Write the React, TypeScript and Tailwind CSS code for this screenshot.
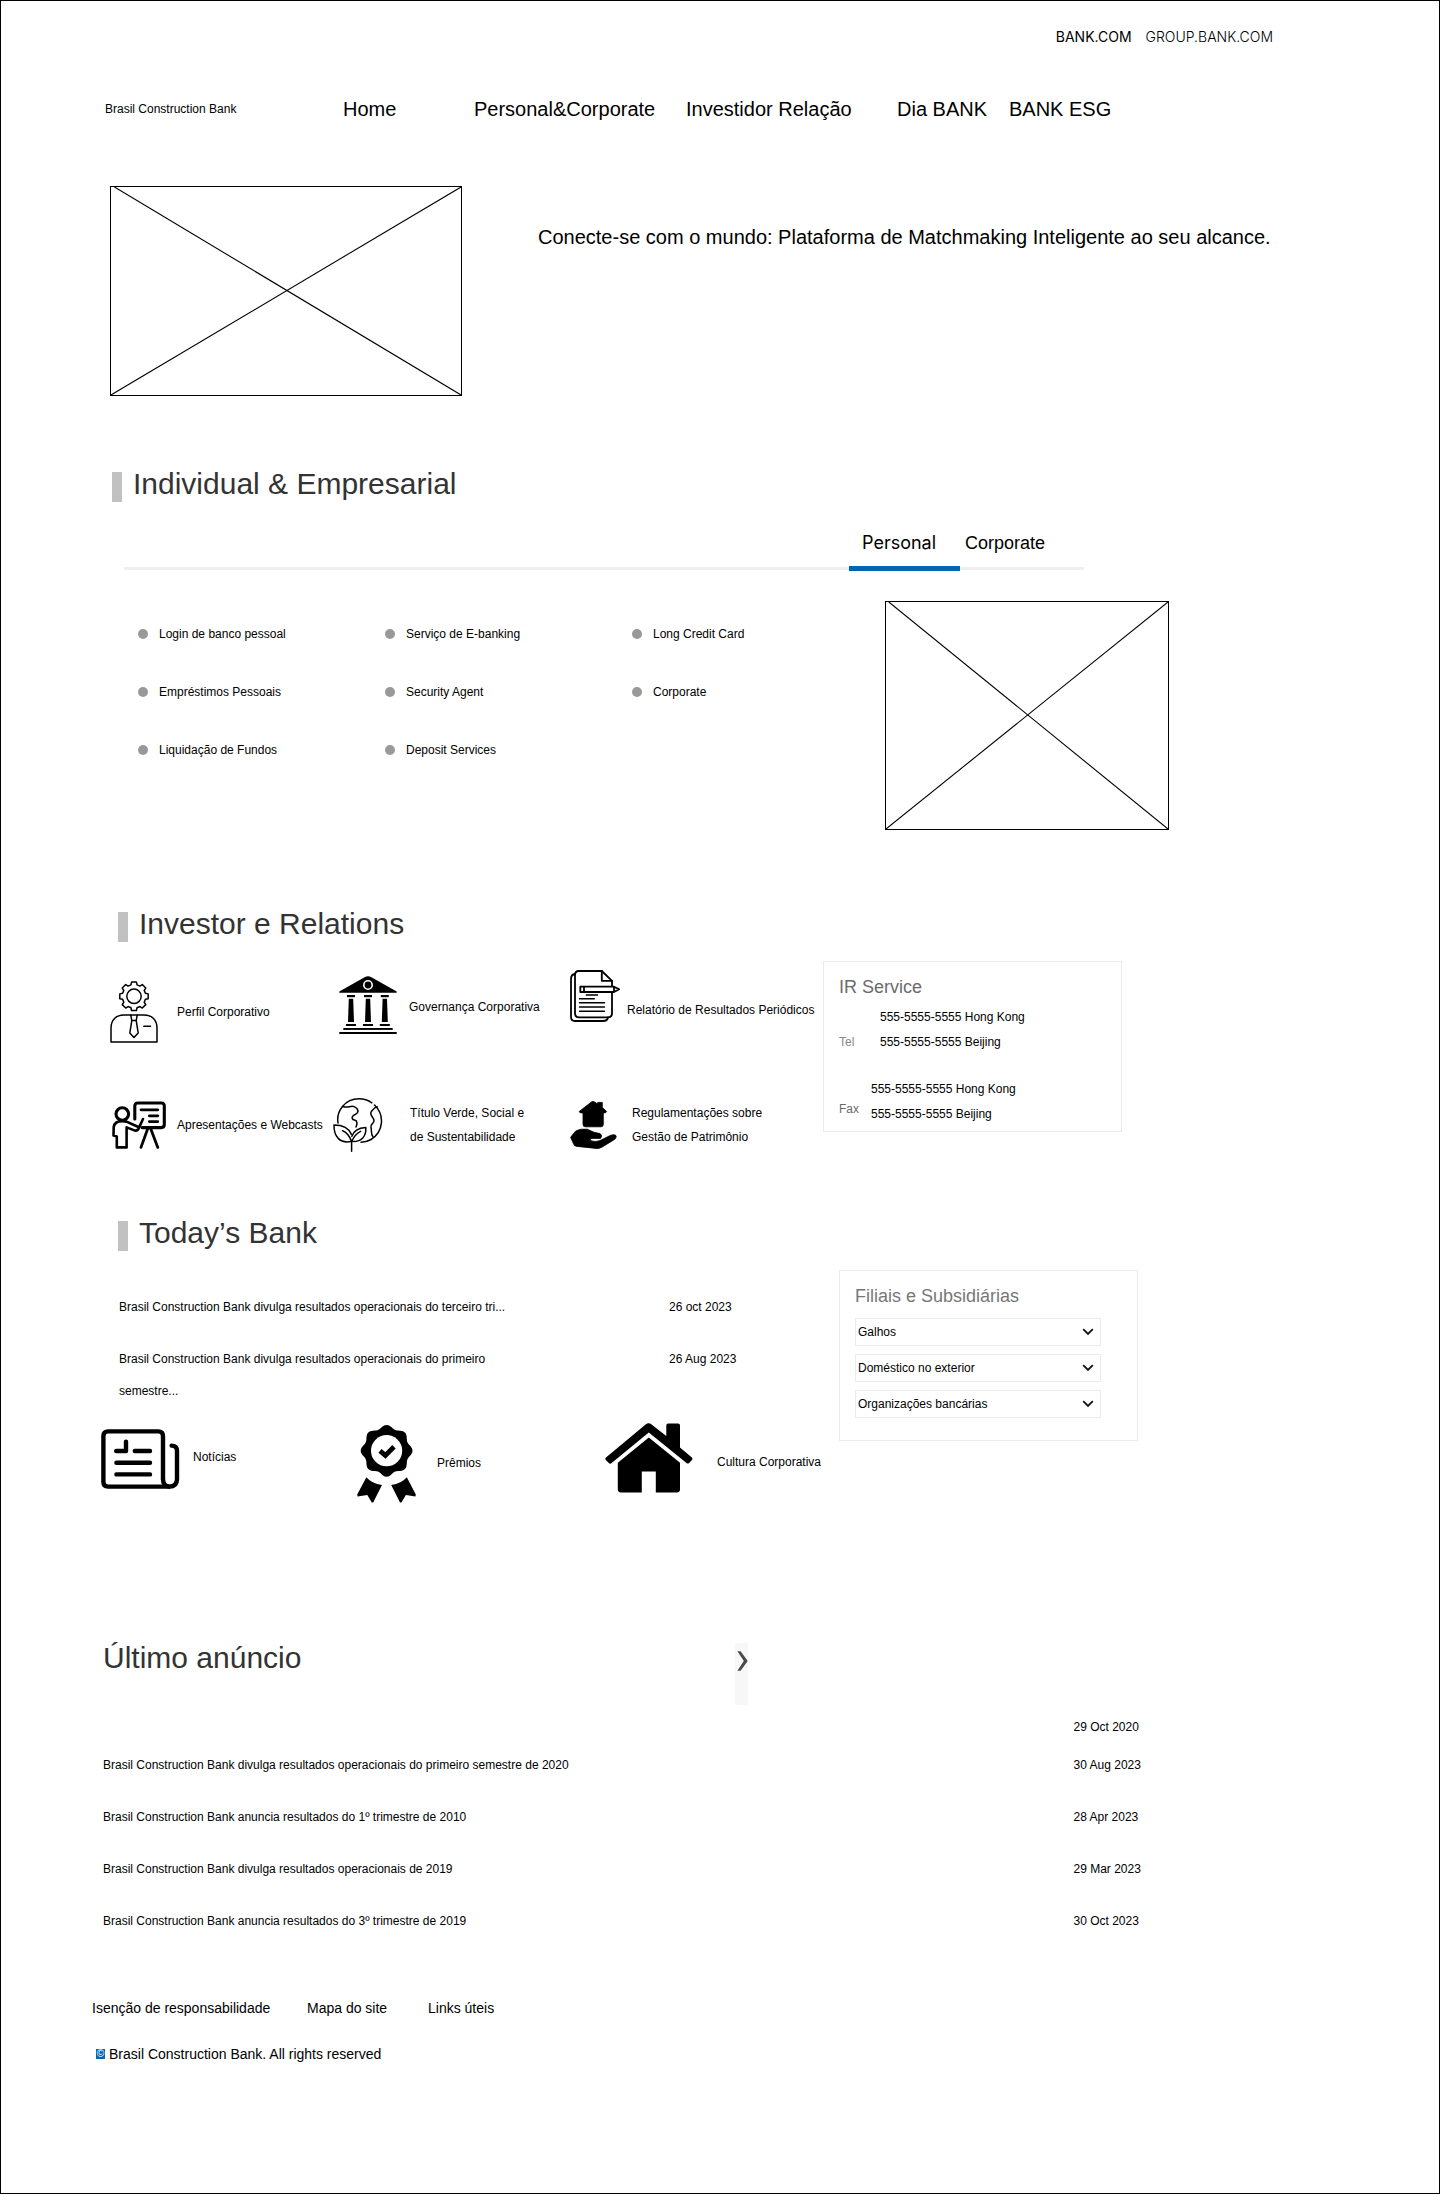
import { useState, type ReactNode } from "react";

const gearPath = (() => {
  const pts: string[] = [];
  const teeth = 8;
  for (let i = 0; i < teeth; i++) {
    const base = (i * 2 * Math.PI) / teeth - Math.PI / 2;
    const corners: [number, number][] = [
      [-0.26, 11.8],
      [-0.17, 14.4],
      [0.17, 14.4],
      [0.26, 11.8],
    ];
    corners.forEach(([a, r]) =>
      pts.push(`${(24 + r * Math.cos(base + a)).toFixed(2)} ${(15.3 + r * Math.sin(base + a)).toFixed(2)}`),
    );
  }
  return `M${pts.join("L")}Z`;
})();

const sealPath = (() => {
  const pts: string[] = [];
  for (let i = 0; i < 96; i++) {
    const a = (i * 2 * Math.PI) / 96;
    const r = 24.2 + 1.7 * Math.cos(8 * a);
    pts.push(`${(29.6 + r * Math.cos(a)).toFixed(2)} ${(25.8 + r * Math.sin(a)).toFixed(2)}`);
  }
  return `M${pts.join("L")}Z`;
})();

function ProfileIcon() {
  return (
    <svg width="48" height="62" viewBox="0 0 48 62" fill="none" stroke="#000" strokeWidth="1.5" strokeLinejoin="round" strokeLinecap="round" aria-hidden="true">
      <path d={gearPath} />
      <circle cx="24" cy="15.3" r="7.2" />
      <path d="M1 61V47C1 39 6 33.9 14 33.9H34C42 33.9 47 39 47 47V61Z" />
      <path d="M20.8 34L21.8 39.6H26.2L27.2 34M21.8 39.6L19.8 52L24 56.5L28.2 52L26.2 39.6M33.8 45.2H40.5" />
    </svg>
  );
}

function BuildingIcon() {
  return (
    <svg width="58" height="62" viewBox="0 0 58 62" fill="#000" aria-hidden="true">
      <path d="M0.3 16.8V15.6L25.6 1.2Q29 -0.8 32.4 1.2L57.7 15.6V16.8Z" />
      <circle cx="29" cy="9" r="4.2" stroke="#fff" strokeWidth="1.6" />
      {[12, 29, 45.8].map((x) => (
        <g key={x}>
          <rect x={x - 4} y="19" width="8" height="2.2" />
          <path d={`M${x - 2.2} 22.8H${x + 2.2}L${x + 3} 46H${x - 3}Z`} />
          <rect x={x - 5} y="48" width="10" height="2" />
        </g>
      ))}
      <rect x="4.3" y="52" width="49.4" height="1.9" />
      <rect x="0.3" y="56" width="57.4" height="2" />
    </svg>
  );
}

function ReportIcon() {
  return (
    <svg width="50" height="52" viewBox="0 0 50 52" fill="none" stroke="#000" strokeWidth="1.8" strokeLinejoin="round" strokeLinecap="round" aria-hidden="true">
      <path d="M5 4Q1 4.5 1 9V47Q1 51 5 51H33Q37.5 51 38 47.5" />
      <path d="M31.8 1H9Q5 1 5 5V43.3Q5 47.3 9 47.3H38Q42 47.3 42 43.3V10.8Z" />
      <path d="M31.8 1V10.8H42" />
      <path d="M10.3 16.7H44L49.2 19.3L44 22H10.3ZM14 16.7V22M44 16.7V22" fill="#fff" />
      <path d="M16.3 25H27.5M9.5 28.8H24.3M9.5 32.8H34.5M9.5 37H34.5M9.5 41.2H34.5" strokeWidth="1.4" />
    </svg>
  );
}

function PresentationIcon() {
  return (
    <svg width="54" height="48" viewBox="0 0 54 48" fill="none" stroke="#000" strokeWidth="3.1" strokeLinejoin="round" strokeLinecap="round" aria-hidden="true">
      <circle cx="10.3" cy="13" r="6.3" />
      <path d="M22.8 18V5Q22.8 2 25.8 2H49.3Q52.3 2 52.3 5V23.6Q52.3 26.6 49.3 26.6H30" />
      <path d="M29 8.8H45.8M37.3 14.8H45.8M37.3 20.6H45.8" strokeWidth="2.8" />
      <path d="M35.6 28L29 46.4M38.8 28L45.8 46.4" strokeWidth="2.8" />
      <path d="M4.8 46.4H14.6V26.4L23 29.6Q26 30 27 26.6L31 18M26.4 26L14.5 20.6Q3 18.6 1.7 26L1.5 34.5L4.8 35.5V46.4" strokeWidth="2.6" />
    </svg>
  );
}

function GlobeLeafIcon() {
  return (
    <svg width="50" height="54" viewBox="0 0 50 54" fill="none" stroke="#000" strokeWidth="1.5" strokeLinejoin="round" strokeLinecap="round" aria-hidden="true">
      <path d="M5 25C3 13 12 0.8 26 0.8C31 0.8 35.5 2.4 38.8 4.8M41.5 7C52 17 50.5 34 38 41.5Q33.5 44.2 28 44.2" />
      <path d="M10 8.5C15 10.5 17.5 7.2 21 8.6C26 10.8 26 14.4 22.4 16.4C18 18.4 18.4 21.4 21.6 22C24.6 22.6 24.4 26 23 29" />
      <path d="M44.4 9C42.5 8.2 40.5 11 38.4 13.4C35.6 17.4 41.6 19.4 41 23C40.6 25.8 37 26 38 29.6C39 32.6 37.4 36 40 38.8" />
      <path d="M18.6 53.2V42.6M18.6 43.8C16.6 37.4 14 34.6 9.6 32.8M18.6 43.8C21 38.4 23.6 35.2 27.6 33.4" />
      <path d="M17.6 43.6C7 45.4 0.8 38.8 1 27C9.6 27 15.4 29 18.4 36.4" />
      <path d="M19.8 43.6C28.4 43.8 33.4 38.6 32.8 29.4C26 29.8 20.6 32.4 18.8 38.4" />
    </svg>
  );
}

function HandHouseIcon() {
  return (
    <svg width="47" height="48" viewBox="0 0 47 48" fill="#000" stroke="#000" strokeWidth="0.8" strokeLinejoin="round" aria-hidden="true">
      <path d="M9.2 10.5L21.5 0.9Q23 0 24.5 0.9L27.7 3V1.4H32.3V6.4L36.6 10.5Q36.4 12 33.3 12V23.5Q33.3 25.8 31 25.8H15.3Q13 25.8 13 23.5V12Q9 12 9.2 10.5Z" />
      <path d="M0.6 36.3L5.7 30Q10 27.4 17.3 28.2L24 31.3L30 32.6Q33 34.6 30.6 37.4L20.4 37.4V39.6Q25 41.4 30 39.6L40.6 34.3Q46.4 32.6 46.2 36Q46 38 43 39.4L31.5 46.4Q29 47.8 26 47.4L7 45.4Q4 45.2 3.4 42.6Z" />
    </svg>
  );
}

function NewspaperIcon() {
  return (
    <svg width="79" height="68" viewBox="0 -6 79 68" fill="none" stroke="#000" strokeWidth="4.4" strokeLinejoin="round" strokeLinecap="round" aria-hidden="true">
      <path d="M62 50V7Q62 2.4 57.4 2.4H7Q2.4 2.4 2.4 7V53Q2.4 57.6 7 57.6H68.4Q76 57.6 76 50V22Q76 16.8 70.6 16.6" />
      <path d="M62 50Q62 57.2 68.4 57.6" />
      <path d="M15.4 33.8H49M15.4 45.4H49M33.8 22H49M15.2 22H25V12.6" />
    </svg>
  );
}

function AwardIcon() {
  return (
    <svg width="59" height="80" viewBox="0 -2 59 80" aria-hidden="true">
      <path d={sealPath} fill="#000" />
      <circle cx="29.6" cy="25.7" r="15.6" fill="#fff" />
      <path d="M23 25.8L28.4 30.4L37 21.8" fill="none" stroke="#000" strokeWidth="4.8" />
      <path
        d="M9.4 52.2Q14.5 58.4 25 60L16.2 77.4H14.8L10.3 70L0.6 71.4L0.2 69.6ZM49.8 52.2Q44.7 58.4 34.2 60L43 77.4H44.4L48.9 70L58.4 71.4L58.8 69.6Z"
        fill="#000"
      />
    </svg>
  );
}

function HouseIcon() {
  return (
    <svg width="88" height="78" viewBox="0 0 88 78" fill="#000" aria-hidden="true">
      <path d="M1 34.6L40.6 1.4Q43.6 -0.8 46.6 1.4L61.3 13V2.2Q61.3 0.4 63.2 0.4H73Q75 0.4 75 2.2V24.4L86.6 34.2Q88 35.6 87 37L83.8 40.2Q82.8 41 81.8 40.2L43.8 9.6L6 40.4Q5 41 4 40.2L0.8 37Q-0.2 35.6 1 34.6Z" />
      <path d="M43.8 14.4L75 39.8V66.6Q75 69.4 72 69.4H50.8V48.6H36.8V69.4H15.8Q12.8 69.4 12.8 66.6V39.8Z" />
    </svg>
  );
}

function ImagePlaceholder({ className }: { className: string }) {
  return (
    <div role="img" aria-label="Imagem" className={`border border-black ${className}`}>
      <svg className="block h-full w-full" viewBox="0 0 100 100" preserveAspectRatio="none" stroke="#000" strokeWidth="1.1" aria-hidden="true">
        <line x1="1" y1="0" x2="100" y2="100" vectorEffect="non-scaling-stroke" />
        <line x1="0" y1="100" x2="100" y2="0" vectorEffect="non-scaling-stroke" />
      </svg>
    </div>
  );
}

function SectionTitle({ children }: { children: ReactNode }) {
  return (
    <div className="flex items-start gap-[11px]">
      <span className="h-[30px] w-[10px] shrink-0 bg-[#c1c1c1]" />
      <h2 className="text-[30px] leading-6 whitespace-nowrap text-[#333]">{children}</h2>
    </div>
  );
}

function IconLink({ icon, slot, className = "", children }: { icon: ReactNode; slot: string; className?: string; children: ReactNode }) {
  return (
    <a href="#" className={`flex text-xs leading-6 whitespace-nowrap ${className}`}>
      <span className={`shrink-0 ${slot}`}>{icon}</span>
      <span>{children}</span>
    </a>
  );
}

const services = [
  "Login de banco pessoal",
  "Serviço de E-banking",
  "Long Credit Card",
  "Empréstimos Pessoais",
  "Security Agent",
  "Corporate",
  "Liquidação de Fundos",
  "Deposit Services",
];

const announcements = [
  ["Brasil Construction Bank divulga resultados operacionais do primeiro semestre de 2020", "30 Aug 2023"],
  ["Brasil Construction Bank anuncia resultados do 1º trimestre de 2010", "28 Apr 2023"],
  ["Brasil Construction Bank divulga resultados operacionais de 2019", "29 Mar 2023"],
  ["Brasil Construction Bank anuncia resultados do 3º trimestre de 2019", "30 Oct 2023"],
];

const branchMenus = ["Galhos", "Doméstico no exterior", "Organizações bancárias"];

export default function App() {
  const [tab, setTab] = useState("Personal");

  return (
    <div className="min-h-screen border border-black bg-white font-['Liberation_Sans',Arial,sans-serif] text-black">
      <header>
        <div className="flex justify-end gap-[14px] pt-[26px] pr-[166px] font-[Inter,sans-serif] text-sm leading-5">
          <a href="#">BANK.COM</a>
          <a href="#" className="font-light">GROUP.BANK.COM</a>
        </div>
        <nav className="mt-12 grid grid-cols-[238fr_131fr_212fr_211fr_112fr_430fr] items-center pl-[104px] text-xl leading-7 whitespace-nowrap">
          <a href="#" className="text-xs leading-7">Brasil Construction Bank</a>
          <a href="#">Home</a>
          <a href="#">Personal&amp;Corporate</a>
          <a href="#">Investidor Relação</a>
          <a href="#">Dia BANK</a>
          <a href="#">BANK ESG</a>
        </nav>
      </header>

      <main>
        <section className="mt-[63px] grid grid-cols-[352fr_76fr_901fr] pl-[109px]">
          <ImagePlaceholder className="h-[210px]" />
          <h1 className="col-start-3 mt-[37px] text-xl leading-7">
            Conecte-se com o mundo: Plataforma de Matchmaking Inteligente ao seu alcance.
          </h1>
        </section>

        <section className="mt-[76px]">
          <div className="pl-[111px]">
            <SectionTitle>Individual &amp; Empresarial</SectionTitle>
          </div>
          <div className="mt-[27px] grid grid-cols-[960fr_355fr] pl-[123px]">
            <div role="tablist" className="flex justify-end border-b-[3px] border-[#eee] text-lg leading-7">
              <button
                type="button"
                role="tab"
                aria-selected={tab === "Personal"}
                onClick={() => setTab("Personal")}
                className={`-mb-1 w-[111px] cursor-pointer border-b-[5px] pb-[9px] pl-[13px] text-left font-[Inter,sans-serif] ${tab === "Personal" ? "border-[#0066b3]" : "border-transparent"}`}
              >
                Personal
              </button>
              <button
                type="button"
                role="tab"
                aria-selected={tab === "Corporate"}
                onClick={() => setTab("Corporate")}
                className={`-mb-1 w-[124px] cursor-pointer border-b-[5px] pb-[9px] pl-[5px] text-left ${tab === "Corporate" ? "border-[#0066b3]" : "border-transparent"}`}
              >
                Corporate
              </button>
            </div>
          </div>
          <div className="mt-[31px] grid grid-cols-[747fr_284fr_270fr] pl-[137px]">
            <ul className="grid grid-cols-[247fr_247fr_253fr] content-start pt-1 text-xs">
              {services.map((s) => (
                <li key={s} className="flex h-[58px] items-center gap-[11px]">
                  <span className="size-[10px] rounded-full bg-[#999]" />
                  <a href="#">{s}</a>
                </li>
              ))}
            </ul>
            <ImagePlaceholder className="h-[229px]" />
          </div>
        </section>

        <section className="mt-[82px]">
          <div className="pl-[117px]">
            <SectionTitle>Investor e Relations</SectionTitle>
          </div>
          <div className="mt-[19px] grid grid-cols-[713fr_299fr_317fr] items-start pl-[109px]">
            <div className="grid grid-cols-[223fr_237fr_253fr] gap-y-[55px] pt-[9px]">
              <IconLink icon={<ProfileIcon />} slot="w-[67px]" className="items-center self-end">
                Perfil Corporativo
              </IconLink>
              <IconLink icon={<BuildingIcon />} slot="w-[76px] pl-[6px]" className="items-center self-center">
                Governança Corporativa
              </IconLink>
              <IconLink icon={<ReportIcon />} slot="w-[57px]" className="h-[73px] items-start [&>span:last-child]:mt-7">
                Relatório de Resultados Periódicos
              </IconLink>
              <IconLink icon={<PresentationIcon />} slot="w-[67px] pl-[2px]" className="items-center">
                Apresentações e Webcasts
              </IconLink>
              <IconLink icon={<GlobeLeafIcon />} slot="w-[77px]" className="items-center">
                Título Verde, Social e
                <br />
                de Sustentabilidade
              </IconLink>
              <IconLink icon={<HandHouseIcon />} slot="w-[62px]" className="items-center">
                Regulamentações sobre
                <br />
                Gestão de Patrimônio
              </IconLink>
            </div>
            <aside className="border border-[#ebebeb] px-[15px] pt-[13px] pb-1">
              <h3 className="text-lg leading-6 text-[#6b6b6b]">IR Service</h3>
              <dl className="mt-[6px] text-xs leading-[25px]">
                <div className="flex">
                  <dt className="w-[41px] self-end text-[#888]">Tel</dt>
                  <dd>
                    555-5555-5555 Hong Kong
                    <br />
                    555-5555-5555 Beijing
                  </dd>
                </div>
                <div className="mt-[22px] flex">
                  <dt className="w-8 self-end leading-9 text-[#6b6b6b]">Fax</dt>
                  <dd>
                    555-5555-5555 Hong Kong
                    <br />
                    555-5555-5555 Beijing
                  </dd>
                </div>
              </dl>
            </aside>
          </div>
        </section>

        <section className="mt-[69px]">
          <div className="pl-[117px]">
            <SectionTitle>Today’s Bank</SectionTitle>
          </div>
          <div className="mt-[19px] grid grid-cols-[738fr_299fr_301fr] items-start pl-[100px]">
            <div>
              <ul className="pt-[21px] pl-[18px] text-xs leading-8">
                <li className="grid grid-cols-[550fr_170fr]">
                  <a href="#">Brasil Construction Bank divulga resultados operacionais do terceiro tri...</a>
                  <time>26 oct 2023</time>
                </li>
                <li className="mt-5 grid grid-cols-[550fr_170fr]">
                  <a href="#">
                    Brasil Construction Bank divulga resultados operacionais do primeiro
                    <br />
                    semestre...
                  </a>
                  <time>26 Aug 2023</time>
                </li>
              </ul>
              <div className="mt-4 grid grid-cols-[256fr_248fr_234fr] items-start">
                <IconLink icon={<NewspaperIcon />} slot="w-[92px]" className="items-center">
                  Notícias
                </IconLink>
                <IconLink icon={<AwardIcon />} slot="w-20" className="items-center">
                  Prêmios
                </IconLink>
                <IconLink icon={<HouseIcon />} slot="w-28" className="items-center">
                  Cultura Corporativa
                </IconLink>
              </div>
            </div>
            <aside className="border border-[#ebebeb] pt-[13px] pr-9 pb-[22px] pl-[15px]">
              <h3 className="text-lg leading-6 text-[#777]">Filiais e Subsidiárias</h3>
              <div className="mt-[10px] grid gap-2">
                {branchMenus.map((m) => (
                  <div key={m} className="relative">
                    <select aria-label={m} className="block h-7 w-full appearance-none border border-[#ebebeb] bg-white pl-[2px] text-xs">
                      <option>{m}</option>
                    </select>
                    <svg className="pointer-events-none absolute top-[10px] right-[7px]" width="12" height="8" viewBox="0 0 12 8" fill="none" stroke="#111" strokeWidth="1.8" aria-hidden="true">
                      <path d="M1.2 1.2L6 6L10.8 1.2" />
                    </svg>
                  </div>
                ))}
              </div>
            </aside>
          </div>
        </section>

        <section className="mt-[140px] pl-[102px]">
          <div className="grid grid-cols-[632fr_704fr] items-start">
            <h2 className="text-[30px] leading-[30px] text-[#333]">Último anúncio</h2>
            <button type="button" aria-label="Ver mais" className="flex h-[62px] w-[13px] cursor-pointer items-start bg-[#f7f7f7] pt-2 pl-[2px]">
              <svg width="11" height="20" viewBox="0 0 11 20" fill="#4a4a4a" aria-hidden="true">
                <path d="M0.4 0.2H3.6L10.4 9.4V10.6L3.6 19.8H0.4L6.8 10Z" />
              </svg>
            </button>
          </div>
          <div className="pr-[42px]">
            <table className="mt-[10px] w-full table-fixed text-left text-xs leading-6">
              <tbody>
                <tr className="h-6">
                  <td className="w-3/4 p-0" />
                  <td className="p-0">29 Oct 2020</td>
                </tr>
                {announcements.map(([title, date]) => (
                  <tr key={title} className="h-[52px]">
                    <td className="p-0">
                      <a href="#">{title}</a>
                    </td>
                    <td className="p-0">{date}</td>
                  </tr>
                ))}
              </tbody>
            </table>
          </div>
        </section>
      </main>

      <footer className="mt-[49px] pb-16 pl-[91px] text-sm leading-6">
        <nav className="grid grid-cols-[215fr_121fr_1011fr]">
          <a href="#">Isenção de responsabilidade</a>
          <a href="#">Mapa do site</a>
          <a href="#">Links úteis</a>
        </nav>
        <p className="mt-[22px] flex items-center gap-1 pl-1">
          <span className="w-[9px] bg-[#0067b8] text-center text-[10px] leading-[10px] text-white">©</span>
          Brasil Construction Bank. All rights reserved
        </p>
      </footer>
    </div>
  );
}
